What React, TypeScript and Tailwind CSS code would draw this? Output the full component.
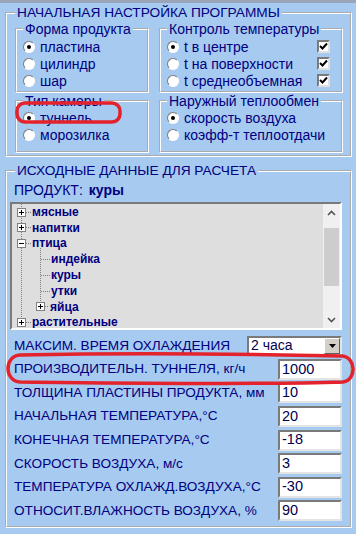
import React from 'react';

const Radio = ({ on }: { on?: boolean }) => (
  <span className="relative w-3 h-3 shrink-0 rounded-full bg-white border border-t-[#7a7a7a] border-l-[#7a7a7a] border-r-white border-b-white flex items-center justify-center">
    {on && <span className="w-1 h-1 rounded-full bg-black" />}
  </span>
);

const Check = () => (
  <span className="w-[13px] h-[13px] shrink-0 bg-white border-2 border-t-[#7a7a7a] border-l-[#7a7a7a] border-r-[#e0e0e0] border-b-[#e0e0e0] flex items-center justify-center">
    <svg width="9" height="9" viewBox="0 0 9 9">
      <path d="M1 4 L3.5 6.5 L8 1.5" stroke="#000" strokeWidth="2" fill="none" />
    </svg>
  </span>
);

const RadioRow = ({ label, on, check }: { label: string; on?: boolean; check?: boolean }) => (
  <div className="h-[17px] flex items-center">
    <Radio on={on} />
    <span className="ml-[5px] text-[14px] leading-none">{label}</span>
    {check && <span className="ml-auto"><Check /></span>}
  </div>
);

const Group = ({ title, className, children }: { title: string; className: string; children: React.ReactNode }) => (
  <fieldset className={`border-2 [border-style:groove] border-white min-w-0 ${className}`}>
    <legend className="px-[2px] text-[14px] leading-[16px]">{title}</legend>
    {children}
  </fieldset>
);

const tree = [
  { t: 'мясные', lvl: 1 },
  { t: 'напитки', lvl: 1 },
  { t: 'птица', lvl: 1, open: true },
  { t: 'индейка', lvl: 2 },
  { t: 'куры', lvl: 2 },
  { t: 'утки', lvl: 2 },
  { t: 'яйца', lvl: 2, box: true },
  { t: 'растительные', lvl: 1 },
];

const params = [
  { label: 'ПРОИЗВОДИТЕЛЬН. ТУННЕЛЯ, кг/ч', v: '1000' },
  { label: 'ТОЛЩИНА ПЛАСТИНЫ ПРОДУКТА, мм', v: '10' },
  { label: 'НАЧАЛЬНАЯ ТЕМПЕРАТУРА,°С', v: '20' },
  { label: 'КОНЕЧНАЯ ТЕМПЕРАТУРА,°С', v: '-18' },
  { label: 'СКОРОСТЬ ВОЗДУХА, м/с', v: '3' },
  { label: 'ТЕМПЕРАТУРА ОХЛАЖД.ВОЗДУХА,°С', v: '-30' },
  { label: 'ОТНОСИТ.ВЛАЖНОСТЬ ВОЗДУХА, %', v: '90' },
];

const sunken = 'border-2 border-t-[#7a7a7a] border-l-[#7a7a7a] border-r-[#e4e4e4] border-b-[#e4e4e4] bg-white';

const TreeBox = ({ x, c, open }: { x: number; c: number; open?: boolean }) => (
  <g>
    <rect x={x + 0.5} y={c - 3.5} width="8" height="8" fill="#fff" stroke="#808080" />
    <rect x={x + 2} y={c} width="5" height="1" fill="#000" />
    {!open && <rect x={x + 4} y={c - 2} width="1" height="5" fill="#000" />}
  </g>
);

export default function App() {
  return (
    <div className="relative w-[356px] h-[534px] overflow-hidden bg-[#a6caf0] text-[#000080] font-['Liberation_Sans',Arial,sans-serif]">
      <div className="h-[3px] bg-[#9aa6b8]" />

      {/* НАЧАЛЬНАЯ НАСТРОЙКА */}
      <fieldset className="mt-[2px] ml-[5px] w-[347px] border-2 [border-style:groove] border-white pl-[8px] pr-[7px] pb-[2px] min-w-0">
        <legend className="px-[2px] text-[13.7px] leading-[16px]">НАЧАЛЬНАЯ НАСТРОЙКА ПРОГРАММЫ</legend>
        <div className="flex gap-[10px]">
          <Group title="Форма продукта" className="w-[134px] pl-[6px] pt-[1px] pb-[2px]">
            <RadioRow label="пластина" on />
            <RadioRow label="цилиндр" />
            <RadioRow label="шар" />
          </Group>
          <Group title="Контроль температуры" className="flex-1 pl-[6px] pr-[11px] pt-[1px] pb-[2px]">
            <RadioRow label="t в центре" on check />
            <RadioRow label="t на поверхности" check />
            <RadioRow label="t среднеобъемная" check />
          </Group>
        </div>
        <div className="flex gap-[10px]">
          <Group title="Тип камеры" className="w-[134px] pl-[6px] pb-[8px]">
            <RadioRow label="туннель" on />
            <RadioRow label="морозилка" />
          </Group>
          <Group title="Наружный теплообмен" className="flex-1 pl-[6px] pb-[8px]">
            <RadioRow label="скорость воздуха" on />
            <RadioRow label="коэфф-т теплоотдачи" />
          </Group>
        </div>
      </fieldset>

      {/* ИСХОДНЫЕ ДАННЫЕ */}
      <fieldset className="mt-[6px] ml-[5px] w-[347px] border-2 [border-style:groove] border-white pl-[3px] pr-[8px] pt-[2px] pb-[3px] min-w-0">
        <legend className="ml-[5px] px-[2px] text-[13.7px] leading-[16px]">ИСХОДНЫЕ ДАННЫЕ ДЛЯ РАСЧЕТА</legend>
        <div className="h-[18px] flex items-center pl-[4px] text-[14px]">
          ПРОДУКТ:<span className="ml-[6px] font-bold">куры</span>
        </div>

        <div className="mt-[3px] h-[128px] border-2 border-t-[#7a7a7a] border-l-[#7a7a7a] border-r-white border-b-white bg-[#dedede] flex">
          <div className="relative flex-1 overflow-hidden">
            <svg className="absolute inset-0" width="311" height="124">
              <line x1="9.5" y1="0" x2="9.5" y2="124" stroke="#808080" strokeDasharray="1 1" />
              <line x1="28.5" y1="44" x2="28.5" y2="102" stroke="#808080" strokeDasharray="1 1" />
              {tree.map((r, i) => {
                const c = Math.round(7.5 + 15.8 * i);
                if (r.lvl === 1)
                  return (
                    <g key={i}>
                      <line x1="14" y1={c + 0.5} x2="19" y2={c + 0.5} stroke="#808080" strokeDasharray="1 1" />
                      <TreeBox x={5} c={c} open={r.open} />
                    </g>
                  );
                if (r.box)
                  return (
                    <g key={i}>
                      <line x1="33" y1={c + 0.5} x2="37" y2={c + 0.5} stroke="#808080" strokeDasharray="1 1" />
                      <TreeBox x={24} c={c} />
                    </g>
                  );
                return <line key={i} x1="29" y1={c + 0.5} x2="38" y2={c + 0.5} stroke="#808080" strokeDasharray="1 1" />;
              })}
            </svg>
            <div className="relative">
              {tree.map((r, i) => (
                <div
                  key={i}
                  className={`h-[15.8px] flex items-center text-[12px] font-bold leading-none ${r.lvl === 1 ? 'pl-[20px]' : r.box ? 'pl-[38px]' : 'pl-[39px]'}`}
                >
                  {r.t}
                </div>
              ))}
            </div>
          </div>
          <div className="w-[17px] bg-[#f0f0f0] flex flex-col">
            <div className="h-[17px] flex items-center justify-center">
              <svg width="9" height="6" viewBox="0 0 9 6"><path d="M1 5 L4.5 1.5 L8 5" stroke="#555" strokeWidth="1.6" fill="none" /></svg>
            </div>
            <div className="flex-1">
              <div className="mt-[7px] mx-[1px] h-[58px] bg-[#cdcdcd]" />
            </div>
            <div className="h-[17px] flex items-center justify-center">
              <svg width="9" height="6" viewBox="0 0 9 6"><path d="M1 1 L4.5 4.5 L8 1" stroke="#555" strokeWidth="1.6" fill="none" /></svg>
            </div>
          </div>
        </div>

        <div className="mt-[4px] flex flex-col text-[13.6px]">
          <div className="h-[23.6px] flex items-center justify-between pl-[4px]">
            <span>МАКСИМ. ВРЕМЯ ОХЛАЖДЕНИЯ</span>
            <div className={`w-[95px] h-[20px] flex items-center ${sunken}`}>
              <span className="flex-1 pl-[2px] text-[14px] text-[#000050]">2 часа</span>
              <span className="w-[16px] h-full bg-[#d4d0c8] border border-t-white border-l-white border-r-[#606060] border-b-[#606060] flex items-center justify-center">
                <svg width="7" height="4" viewBox="0 0 7 4"><path d="M0 0 H7 L3.5 4 Z" fill="#000" /></svg>
              </span>
            </div>
          </div>
          {params.map((p) => (
            <div key={p.label} className="h-[23.6px] flex items-center justify-between pl-[4px]">
              <span>{p.label}</span>
              <div className={`w-[64px] h-[21px] flex items-center pl-[2px] text-[14.5px] text-[#000050] ${sunken}`}>{p.v}</div>
            </div>
          ))}
        </div>
      </fieldset>

      {/* red markings */}
      <svg className="absolute inset-0 pointer-events-none" width="356" height="534">
        <rect x="17" y="103" width="103" height="19" rx="8" fill="none" stroke="#e3222b" strokeWidth="3.5" />
        <path
          d="M20 355 C 120 353, 250 354, 342 356 C 356 357, 357 380, 343 382 C 250 385, 120 383, 20 382 C 4 381, 4 356, 20 355 Z"
          fill="none"
          stroke="#e3222b"
          strokeWidth="3.5"
        />
      </svg>
    </div>
  );
}
